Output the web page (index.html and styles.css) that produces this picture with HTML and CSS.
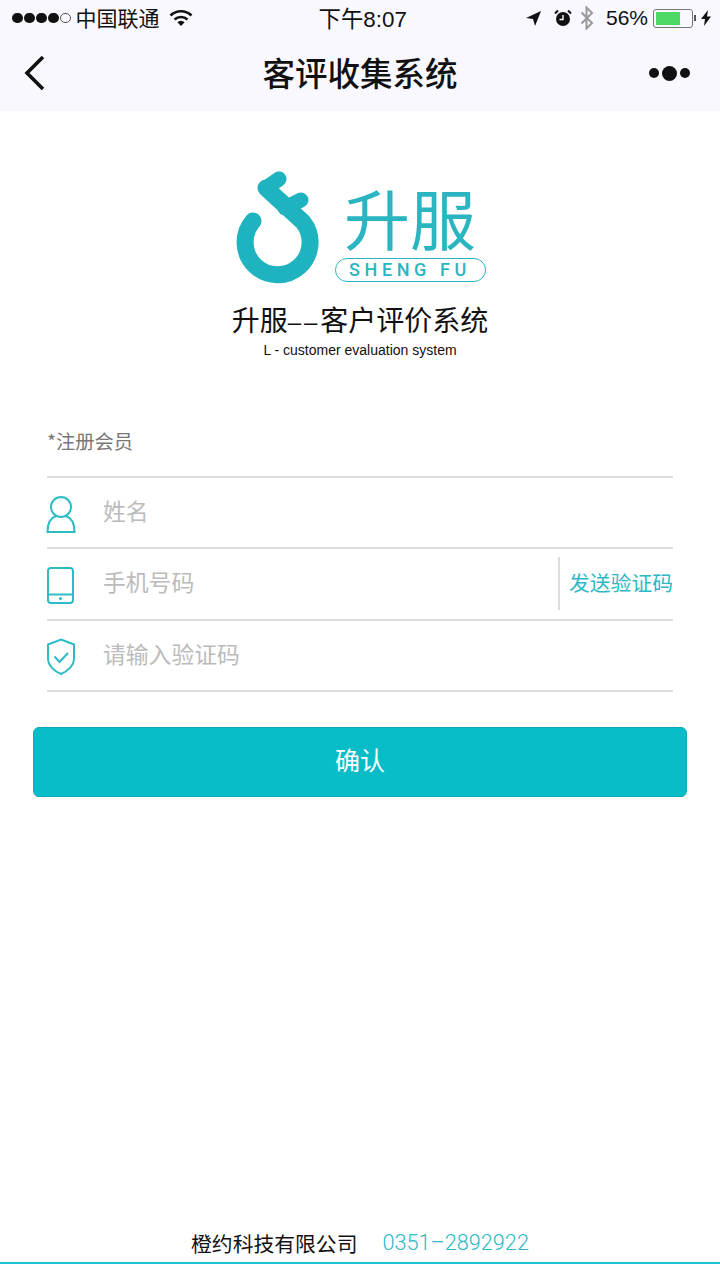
FILE: index.html
```html
<!DOCTYPE html>
<html lang="zh-CN">
<head>
    <meta charset="UTF-8">
    <meta name="viewport" content="width=device-width, initial-scale=1.0">
    <title>客评收集系统</title>
    <link rel="stylesheet" href="styles.css">
</head>
<body>
<div class="page">
    <header class="top">
        <div class="status">
            <div class="status-left">
                <div class="signal"><i></i><i></i><i></i><i></i><i class="off"></i></div>
                <span class="carrier">中国联通</span>
                <svg class="wifi" width="24" height="18" viewBox="0 0 24 18">
                    <path d="M1.5 6.5a15 15 0 0 1 21 0" fill="none" stroke="#111" stroke-width="2.6"/>
                    <path d="M5.5 10.5a9.5 9.5 0 0 1 13 0" fill="none" stroke="#111" stroke-width="2.6"/>
                    <path d="M8.4 13.2a5 5 0 0 1 7.2 0L12 17z" fill="#111"/>
                </svg>
            </div>
            <span class="clock">下午8:07</span>
            <div class="status-right">
                <svg class="arrow" width="16" height="16" viewBox="0 0 16 16"><path d="M16 1 1 8l7 1 2 7z" fill="#111"/></svg>
                <svg class="alarm" width="18" height="18" viewBox="0 0 18 18">
                    <circle cx="9" cy="10" r="7" fill="#111"/>
                    <path d="M9 6v4.5H5.5" fill="none" stroke="#fff" stroke-width="1.4"/>
                    <path d="M1 4.5 4 1.5M17 4.5l-3-3" stroke="#111" stroke-width="2"/>
                </svg>
                <svg class="bt" width="14" height="24" viewBox="0 0 14 24">
                    <path d="M1.5 6.5 12 17l-5.5 5.5v-21L12 7 1.500 17.500" fill="none" stroke="#9a9a9a" stroke-width="2"/>
                </svg>
                <span class="percent">56%</span>
                <div class="battery"><div class="level"></div></div>
                <div class="nub"></div>
                <svg class="bolt" width="10" height="16" viewBox="0 0 10 16"><path d="M7 0 0 9h4l-1 7 7-9.500H6z" fill="#111"/></svg>
            </div>
        </div>
        <nav class="nav">
            <div class="nav-side">
                <svg class="back" width="22" height="36" viewBox="0 0 22 36"><path d="M19 2 3 18l16 16" fill="none" stroke="#111" stroke-width="3.6"/></svg>
            </div>
            <h1>客评收集系统</h1>
            <div class="nav-side more"><i></i><i class="big"></i><i></i></div>
        </nav>
    </header>

    <section class="brand">
        <div class="logo">
            <svg width="86" height="114" viewBox="234 170 86 114">
                <path d="M252 221A32.500 32.500 0 1 0 302 222L265 188" fill="none" stroke="#1fb3c0" stroke-width="17" stroke-linecap="round" stroke-linejoin="round"/>
                <path d="M278 179 265 188M284 208 300 200" fill="none" stroke="#1fb3c0" stroke-width="15" stroke-linecap="round"/>
            </svg>
            <div class="logo-text">
                <div class="logo-cn">升服</div>
                <div class="logo-en">SHENG FU</div>
            </div>
        </div>
        <h2>升服<span class="dash">––</span>客户评价系统</h2>
        <p class="sub">L - customer evaluation system</p>
    </section>

    <form class="form">
        <div class="form-title">*注册会员</div>
        <div class="row">
            <svg class="row-icon" width="30" height="38" viewBox="0 0 30 38">
                <circle cx="15" cy="11" r="10" fill="none" stroke="#2cbcc6" stroke-width="2"/>
                <path d="M10 20C4 22 1.500 28 1.500 36h27C28.500 28 26 22 20 20" fill="none" stroke="#2cbcc6" stroke-width="2"/>
            </svg>
            <span class="holder">姓名</span>
        </div>
        <div class="row">
            <svg class="row-icon" width="30" height="38" viewBox="0 0 30 38">
                <rect x="2" y="1" width="25" height="35" rx="3" fill="none" stroke="#2cbcc6" stroke-width="2"/>
                <path d="M2 27.500h25" stroke="#2cbcc6" stroke-width="2"/>
                <circle cx="14.500" cy="31.500" r="1.500" fill="#2cbcc6"/>
            </svg>
            <span class="holder">手机号码</span>
            <a class="send">发送验证码</a>
        </div>
        <div class="row">
            <svg class="row-icon" width="30" height="38" viewBox="0 0 30 38">
                <path d="M15 1.500 28 6.500v14C28 28 21 33.500 15 36 9 33.500 2 28 2 20.500v-14z" fill="none" stroke="#2cbcc6" stroke-width="2"/>
                <path d="M8.500 18.500 13.500 24l8.500-9" fill="none" stroke="#2cbcc6" stroke-width="2"/>
            </svg>
            <span class="holder">请输入验证码</span>
        </div>
    </form>

    <button class="confirm" type="button">确认</button>

    <footer class="footer">
        <span class="company">橙约科技有限公司</span>
        <span class="phone">0351–2892922</span>
    </footer>
</div>
</body>
</html>
```

FILE: styles.css
```css
* {
    box-sizing: border-box;
}

body {
    margin: 0;
    background-color: #fff;
    color: #111;
    font-family: "Noto Sans CJK SC", "Liberation Sans", sans-serif;
}

.page {
    width: 720px;
    height: 1280px;
    display: flex;
    flex-direction: column;
    overflow: hidden;
}

/* status bar + title */
.top {
    height: 111px;
    background-color: #f9f8fe;
}

.status {
    height: 36px;
    padding: 0 9px 0 12px;
    display: flex;
    align-items: center;
    justify-content: space-between;
    font-family: "Liberation Sans", "Noto Sans CJK SC", sans-serif;
    font-size: 21px;
    position: relative;
}

.status-left, .status-right {
    display: flex;
    align-items: center;
}

.signal {
    display: flex;
    gap: 1.500px;
}

.signal i {
    width: 10.500px;
    height: 10.500px;
    border-radius: 50%;
    background-color: #111;
}

.signal i.off {
    background: none;
    border: 1px solid #555;
}

.carrier {
    margin-left: 5px;
    margin-bottom: 3px;
}

.wifi {
    margin-left: 9px;
}

.clock {
    position: absolute;
    left: 318.500px;
    top: 1px;
    font-size: 22.400px;
}

.status-right .alarm {
    margin-left: 13px;
}

.status-right .bt {
    margin-left: 8px;
}

.percent {
    margin-left: 12px;
}

.battery {
    width: 40px;
    height: 19px;
    margin-left: 5px;
    padding: 2px;
    border: 1px solid #777;
    border-radius: 3px;
}

.level {
    width: 24px;
    height: 100%;
    background-color: #4cd964;
}

.nub {
    width: 2px;
    height: 6px;
    margin-left: 1px;
    background-color: #555;
}

.bolt {
    margin-left: 5px;
}

.nav {
    height: 75px;
    padding: 0 30px 1px;
    display: flex;
    align-items: center;
}

.nav-side {
    width: 60px;
    display: flex;
    align-items: center;
}

.back {
    margin-left: -6px;
}

.nav h1 {
    flex: 1;
    margin: 0 0 2px;
    text-align: center;
    font-size: 32.500px;
    font-weight: 500;
    line-height: 1;
}

.more {
    justify-content: flex-end;
    gap: 3px;
}

.more i {
    width: 10px;
    height: 10px;
    border-radius: 50%;
    background-color: #111;
}

.more i.big {
    width: 15px;
    height: 15px;
}

/* logo */
.brand {
    padding-top: 59px;
    text-align: center;
}

.logo {
    height: 114px;
    display: flex;
    justify-content: center;
}

.logo-text {
    width: 151px;
    margin-left: 14px;
    display: flex;
    flex-direction: column;
    align-items: center;
}

.logo-cn {
    height: 78px;
    margin-top: 10px;
    font-family: "Liberation Sans", "Noto Sans CJK SC", sans-serif;
    font-size: 66px;
    line-height: 84px;
    font-weight: 400;
    color: #2bb5c0;
}

.logo-en {
    width: 151px;
    height: 24px;
    border: 1.500px solid #2bb5c0;
    border-radius: 12px;
    color: #2bb5c0;
    font-family: Roboto, sans-serif;
    font-size: 18px;
    font-weight: 500;
    line-height: 21px;
    letter-spacing: 4.600px;
}

.brand h2 {
    margin: 17px 0 0;
    font-size: 28px;
    font-weight: 400;
    line-height: 36px;
}

.dash {
    font-family: "Liberation Sans", sans-serif;
    font-size: 24px;
    letter-spacing: 3px;
    vertical-align: 1px;
}

.sub {
    margin: 1px 0 0;
    font-family: "Liberation Sans", sans-serif;
    font-size: 14px;
    line-height: 18px;
}

/* form */
.form {
    margin: 60px 47px 0;
}

.form-title {
    height: 59px;
    border-bottom: 2px solid #ddd;
    color: #777;
    font-size: 19.300px;
    line-height: 45px;
}

.row {
    height: 71.300px;
    display: flex;
    align-items: center;
    border-bottom: 2px solid #ddd;
}

.row-icon {
    flex: none;
    margin: 4px 0 0 -1px;
}

.holder {
    margin-left: 27px;
    padding-bottom: 4px;
    color: #bbb;
    font-size: 22.800px;
}

.send {
    margin-left: auto;
    height: 53px;
    padding-left: 9px;
    border-left: 2px solid #ddd;
    color: #2cb9c5;
    font-size: 20.800px;
    line-height: 51px;
}

/* button */
.confirm {
    margin: 35px 33px 0;
    height: 70px;
    padding-bottom: 6px;
    background-color: #08bcc8;
    border: 1px solid #0aa9b3;
    border-radius: 6px;
    color: #fff;
    font-family: inherit;
    font-size: 25px;
}

/* footer */
.footer {
    margin-top: auto;
    margin-bottom: 16px;
    height: 40px;
    padding-top: 6px;
    border-bottom: 2px solid #1fc4d8;
    display: flex;
    justify-content: center;
    gap: 25px;
    font-size: 20.800px;
    line-height: 26px;
}

.phone {
    color: #2cb9c5;
    font-family: Roboto, sans-serif;
    font-weight: 300;
    font-size: 21.700px;
}
```
